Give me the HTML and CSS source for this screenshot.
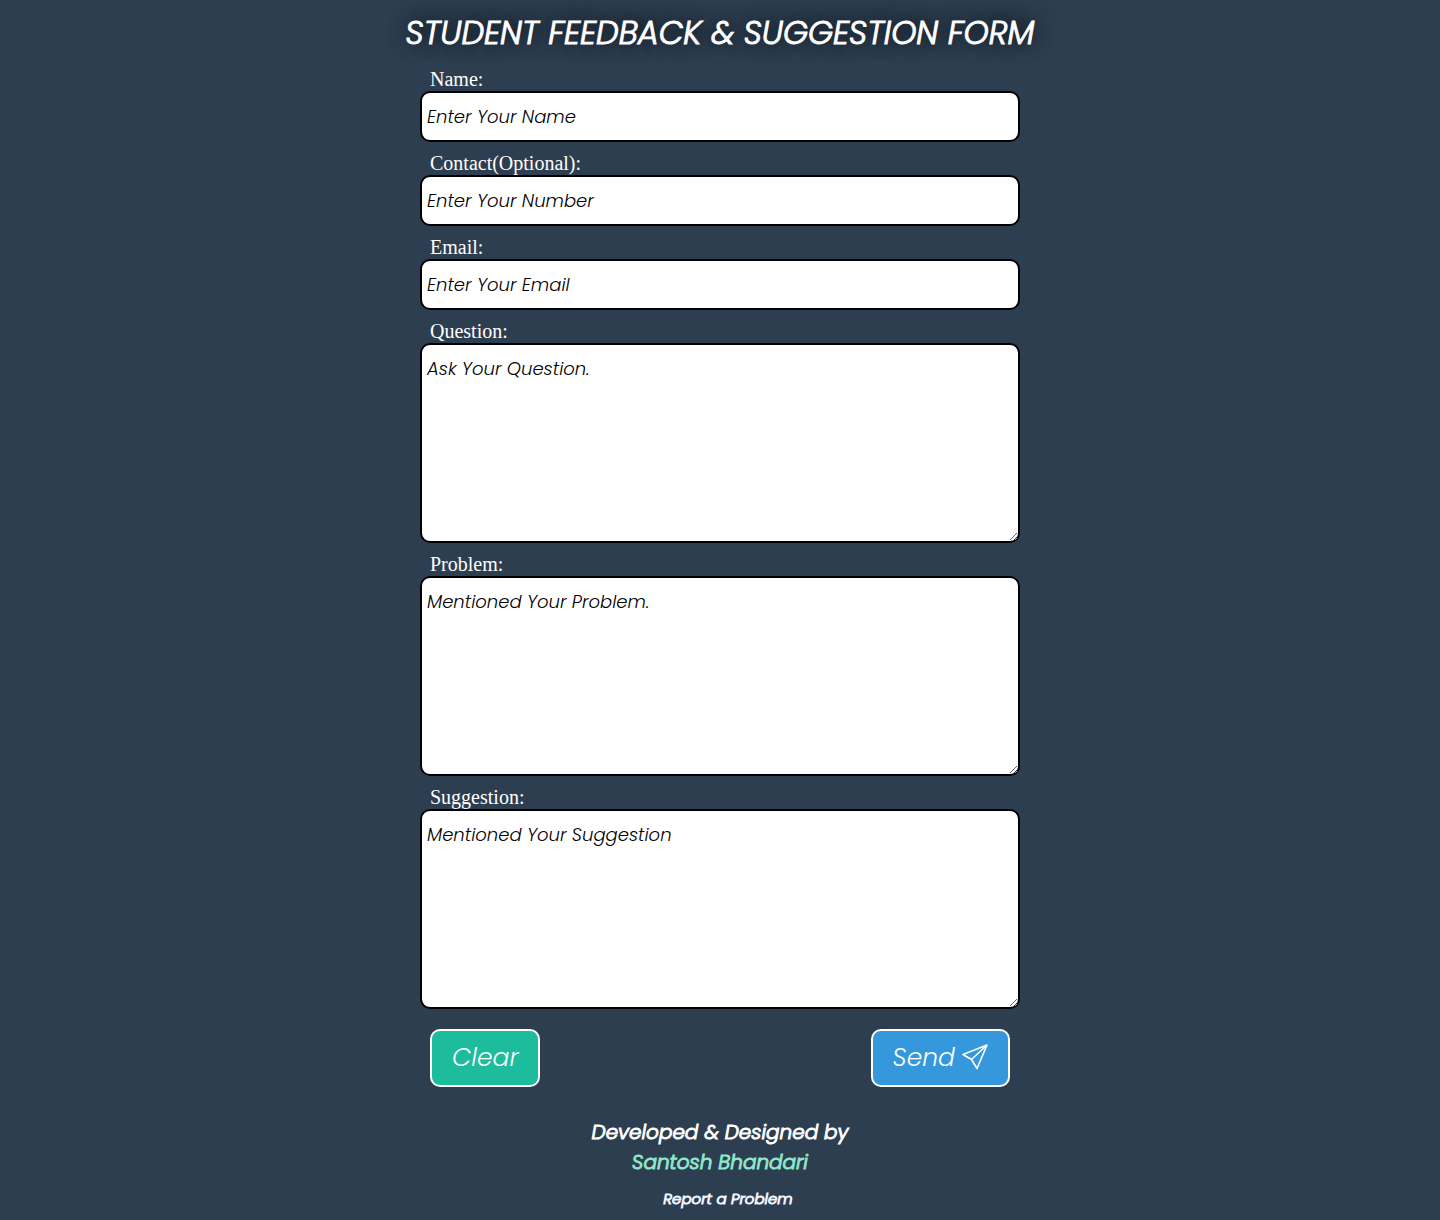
FILE: index.html
```html
<!DOCTYPE html>
<html lang="en">
<head>
<meta charset="utf-8">
<meta name="viewport" content="width=device-width, initial-scale=1">
<title>Student Feedback &amp; Suggestion Form</title>
<link rel="stylesheet" href="styles.css">
</head>
<body>
<main>
  <h1 class="title">STUDENT FEEDBACK &amp; SUGGESTION FORM</h1>
  <form class="form">
    <label class="label" for="name">Name:</label>
    <input class="field" id="name" type="text" placeholder="Enter Your Name">
    <label class="label" for="contact">Contact(Optional):</label>
    <input class="field" id="contact" type="tel" placeholder="Enter Your Number">
    <label class="label" for="email">Email:</label>
    <input class="field" id="email" type="email" placeholder="Enter Your Email">
    <label class="label" for="question">Question:</label>
    <textarea class="field area" id="question" placeholder="Ask Your Question."></textarea>
    <label class="label" for="problem">Problem:</label>
    <textarea class="field area" id="problem" placeholder="Mentioned Your Problem."></textarea>
    <label class="label" for="suggestion">Suggestion:</label>
    <textarea class="field area" id="suggestion" placeholder="Mentioned Your Suggestion"></textarea>
    <div class="actions">
      <button class="button clear" type="reset">Clear</button>
      <button class="button send" type="submit">Send
        <svg class="plane" viewBox="0 0 26 26" aria-hidden="true"><path d="M25 1 1 10.500 9.500 15.500 15 24.500ZM25 1 9.500 15.500"/></svg>
      </button>
    </div>
  </form>
</main>
<footer class="footer">
  <p class="credit">Developed &amp; Designed by</p>
  <p class="credit"><a class="author" href="#author">Santosh Bhandari</a></p>
  <a class="report" href="#report">Report a Problem</a>
</footer>
</body>
</html>
```

FILE: styles.css
```css
* {
  box-sizing: border-box;
  margin: 0;
  padding: 0;
}

body {
  background: #2d3e50;
  color: #fff;
  font-family: Poppins, Inter, sans-serif;
  font-style: italic;
  font-weight: 300;
}

.title {
  padding: 9px 0 1px;
  font-size: 32px;
  font-weight: 300;
  line-height: 48px;
  text-align: center;
  text-shadow: 0 -2px 20px #000, 0 0 20px rgba(0, 0, 0, 0.4);
  -webkit-text-stroke: 1px currentColor;
}

.form {
  display: flex;
  flex-direction: column;
  width: 100%;
  max-width: 600px;
  margin: 0 auto;
}

.label {
  margin: 10px 10px 0;
  font: 20px/23px "Liberation Serif", serif;
}

.field {
  display: block;
  width: 100%;
  padding: 10px 5px;
  border: 2px solid #000;
  border-radius: 10px;
  background: #fff;
  color: #000;
  font: inherit;
  font-size: 18px;
  line-height: 27px;
}

input.field {
  height: 51px;
}

.field::placeholder {
  color: #000;
}

.area {
  height: 200px;
  resize: both;
}

.actions {
  display: flex;
  justify-content: space-between;
  padding: 20px 10px 0;
}

.button {
  display: flex;
  align-items: center;
  gap: 7px;
  height: 58px;
  padding: 0 20px;
  border: 2px solid #fff;
  border-radius: 10px;
  color: #fff;
  font: inherit;
  font-size: 25px;
}

.clear {
  background: #1dbc9c;
}

.send {
  background: #3598dc;
}

.plane {
  width: 26px;
  height: 26px;
  margin-bottom: 2px;
  fill: none;
  stroke: #fff;
  stroke-width: 1.6;
  stroke-linejoin: round;
}

.footer {
  display: flex;
  flex-direction: column;
  align-items: center;
  padding-top: 30px;
  -webkit-text-stroke: 1px currentColor;
}

.credit {
  font-size: 20px;
  line-height: 30px;
}

.author {
  color: #8ee8cb;
  text-decoration: none;
}

.report {
  margin: 10px 0 10px 16px;
  color: #f0f4ff;
  font-size: 15px;
  line-height: 23px;
  text-decoration: none;
}
```
